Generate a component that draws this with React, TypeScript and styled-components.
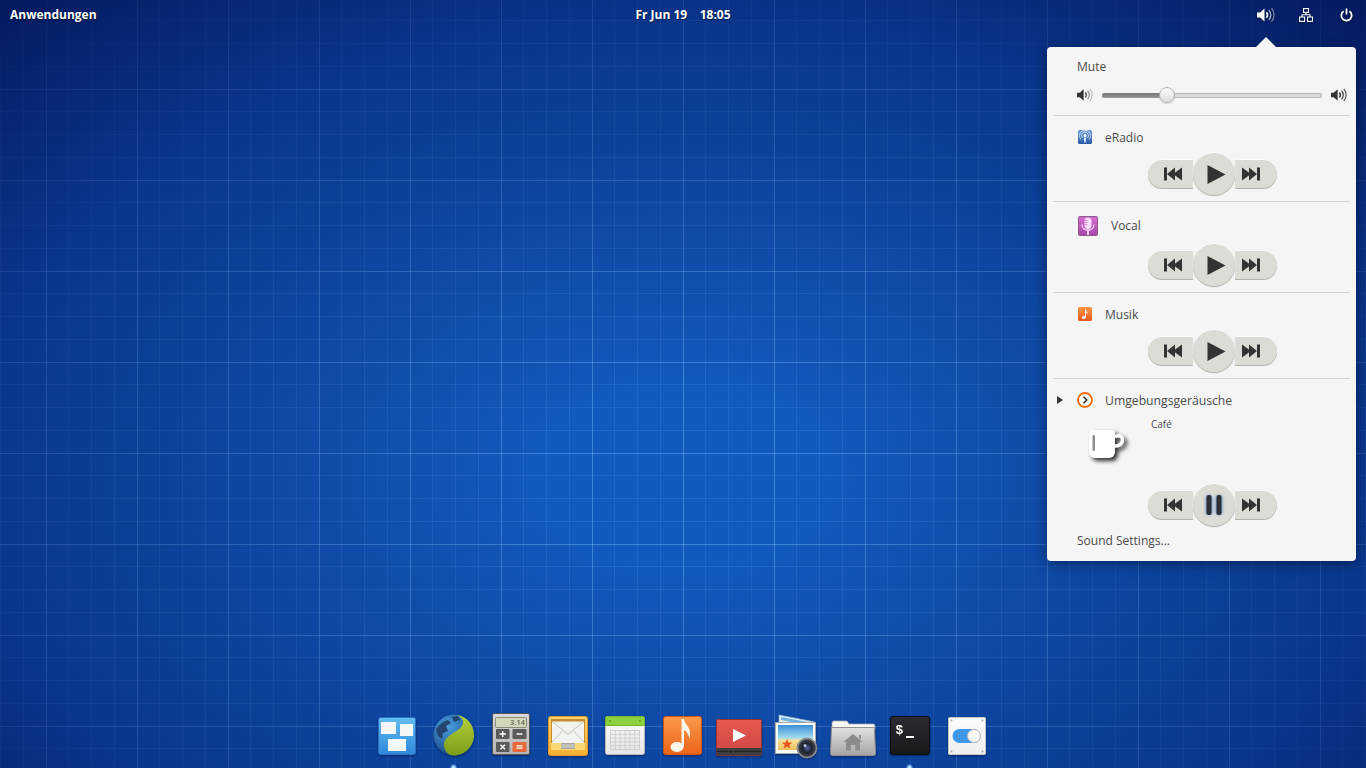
import React from 'react'
import styled, { createGlobalStyle } from 'styled-components'

const GlobalStyle = createGlobalStyle`
  html, body { margin: 0; padding: 0; }
  body { width: 1366px; height: 768px; overflow: hidden; font-family: "Open Sans", "Noto Sans", sans-serif; }
`

const minor = 'rgba(110, 170, 255, 0.16)'
const major = 'rgba(125, 185, 255, 0.42)'

const Desktop = styled.div`
  position: relative;
  width: 1366px;
  height: 768px;
  overflow: hidden;
  display: flex;
  flex-direction: column;
  background-color: #1159ba;
  background-image:
    radial-gradient(ellipse 1000px 640px at 50% 62%, rgba(3, 20, 95, 0) 15%, rgba(3, 20, 95, 0.5) 70%, rgba(3, 18, 85, 0.88) 100%),
    linear-gradient(to right, ${major} 1px, transparent 1px),
    linear-gradient(to bottom, ${major} 1px, transparent 1px),
    linear-gradient(to right, transparent 22px, ${minor} 22px, ${minor} 23px, transparent 23px, transparent 45px, ${minor} 45px, ${minor} 46px, transparent 46px, transparent 68px, ${minor} 68px, ${minor} 69px, transparent 69px),
    linear-gradient(to bottom, transparent 22px, ${minor} 22px, ${minor} 23px, transparent 23px, transparent 45px, ${minor} 45px, ${minor} 46px, transparent 46px, transparent 68px, ${minor} 68px, ${minor} 69px, transparent 69px);
  background-size: 100% 100%, 91px 91px, 91px 91px, 91px 91px, 91px 91px;
  background-position: 0 0, 46px 0, 0 89px, 46px 0, 0 89px;
`

const Panel = styled.header`
  height: 28px;
  display: grid;
  grid-template-columns: 1fr auto 1fr;
  align-items: center;
  color: #fff;
  font-size: 12px;
  font-weight: 700;
  text-shadow: 0 1px 2px rgba(0, 0, 0, 0.6);
`

const AppsLabel = styled.div`
  padding-left: 10px;
`

const Clock = styled.div`
  white-space: pre;
`

const Indicators = styled.div`
  display: flex;
  justify-content: flex-end;
`

const Indicator = styled.div`
  width: 40px;
  height: 28px;
  padding-top: 2px;
  box-sizing: border-box;
  display: flex;
  align-items: center;
  justify-content: center;
  svg { filter: drop-shadow(0 1px 1px rgba(0, 0, 0, 0.5)); }
`

const Workspace = styled.main`
  flex: 1;
`

const Dock = styled.footer`
  height: 56px;
  padding-right: 3px;
  display: flex;
  justify-content: center;
`

const DockSlot = styled.div<{ $running?: boolean }>`
  position: relative;
  width: 57px;
  display: flex;
  justify-content: center;
  svg { display: block; filter: drop-shadow(0 1px 1px rgba(0, 0, 30, 0.45)); }
  &::after {
    content: '';
    display: ${p => (p.$running ? 'block' : 'none')};
    position: absolute;
    left: 25px;
    bottom: -3px;
    width: 7px;
    height: 7px;
    border-radius: 50%;
    background: radial-gradient(circle, #e6f4ff 0, #7fc0ff 35%, rgba(90, 170, 255, 0) 75%);
  }
`

const Popover = styled.section`
  position: absolute;
  top: 47px;
  right: 10px;
  width: 309px;
  height: 514px;
  border-radius: 4px;
  background: #f5f5f5;
  color: #4b4b4b;
  font-size: 12px;
  box-shadow: 0 3px 14px rgba(0, 0, 20, 0.45);
  &::before {
    content: '';
    position: absolute;
    top: -10px;
    left: 209px;
    border-left: 10px solid transparent;
    border-right: 10px solid transparent;
    border-bottom: 10px solid #f5f5f5;
  }
`

const VolumeSection = styled.div`
  height: 68px;
  padding: 12px 0 0 30px;
  box-sizing: border-box;
`

const RowLabel = styled.div`
  height: 16px;
  line-height: 16px;
`

const SliderRow = styled.div`
  margin-top: 12px;
  display: flex;
  align-items: center;
  gap: 9px;
  height: 16px;
  svg { flex: none; }
`

const Track = styled.div`
  position: relative;
  width: 220px;
  height: 5px;
  border-radius: 3px;
  background: linear-gradient(#cfcfcf, #e6e6e6);
  box-shadow: inset 0 0 0 1px #b9b9b9;
`

const TrackFill = styled.div`
  height: 100%;
  border-radius: 3px 0 0 3px;
  background: linear-gradient(#777, #979797);
`

const Thumb = styled.div`
  position: absolute;
  top: -6px;
  width: 16px;
  height: 16px;
  margin-left: -8px;
  box-sizing: border-box;
  border: 1px solid #b4b4b0;
  border-radius: 50%;
  background: linear-gradient(#fafafa, #dedede);
  box-shadow: 0 1px 1px rgba(0, 0, 0, 0.15);
`

const Separator = styled.hr`
  margin: 0 6px;
  border: 0;
  height: 1px;
  background: #d3d3d3;
`

const Player = styled.div<{ $top: number }>`
  padding: ${p => p.$top}px 0 6px;
`

const PlayerHead = styled.div<{ $indent?: number; $tall?: boolean }>`
  display: flex;
  align-items: center;
  height: ${p => (p.$tall ? 20 : 16)}px;
  padding-left: ${p => p.$indent ?? 31}px;
  gap: 13px;
  svg { display: block; flex: none; }
`

const HeadLabel = styled.span<{ $settled?: boolean }>`
  font-size: 12px;
  line-height: 16px;
  margin-top: ${p => (p.$settled ? 0 : 2)}px;
`

const GroupLabel = styled.span`
  margin: 2px 0 0 -1px;
  font-size: 12.2px;
  line-height: 16px;
`

const ExpandArrow = styled.span`
  width: 0;
  height: 0;
  margin-right: 1px;
  border-top: 4px solid transparent;
  border-bottom: 4px solid transparent;
  border-left: 6px solid #333;
`

const Controls = styled.div`
  margin: 8px 0 0 101px;
  width: 129px;
  height: 42px;
  display: flex;
  align-items: center;
`

const SideButton = styled.button<{ $side: 'left' | 'right' }>`
  flex: none;
  width: ${p => (p.$side === 'left' ? 45 : 42)}px;
  height: 28px;
  padding: 0;
  border: 0;
  display: flex;
  align-items: center;
  justify-content: ${p => (p.$side === 'left' ? 'flex-start' : 'flex-end')};
  padding-left: ${p => (p.$side === 'left' ? 16 : 0)}px;
  padding-right: ${p => (p.$side === 'right' ? 17 : 0)}px;
  background: #dcdbd6;
  border-radius: ${p => (p.$side === 'left' ? '14px 0 0 14px' : '0 14px 14px 0')};
  box-shadow: 0 1px 0 #b3b2ab, 0 -1px 0 #fbfbfb;
`

const RoundButton = styled.button`
  flex: none;
  position: relative;
  z-index: 1;
  width: 42px;
  height: 42px;
  padding: 0;
  border: 0;
  border-radius: 50%;
  display: flex;
  align-items: center;
  justify-content: center;
  background: #dcdbd6;
  box-shadow: 0 1px 1px #b3b2ab, 0 -1px 0 #fdfdfd, 0 0 0 1px #e9e8e4;
`

const PlayGlyph = styled.span`
  display: block;
  margin-left: 5px;
  svg { display: block; }
`

const CoverRow = styled.div`
  height: 68px;
  padding-left: 42px;
  display: flex;
  gap: 14px;
`

const Cover = styled.div`
  margin-top: 22px;
  width: 48px;
  svg { display: block; filter: drop-shadow(3px 3px 2px rgba(0, 0, 0, 0.8)); }
`

const TrackName = styled.div`
  margin-top: 9px;
  font-size: 10px;
  line-height: 14px;
`

const SettingsLink = styled.div`
  padding: 1px 0 0 30px;
  height: 16px;
  line-height: 16px;
`

const Speaker = ({ fill, arcs, size = 18 }: { fill: string; arcs: string[]; size?: number }) => (
  <svg width={size} height={16} viewBox="0 0 18 16">
    <path d="M0 5.5h3L7.5 1.5v13L3 10.500H0z" fill={fill} />
    <path d="M9.500 5.200c1.200 1.600 1.200 4 0 5.600" fill="none" stroke={arcs[0]} strokeWidth="1.600" />
    <path d="M12 3.200c2.200 3 2.200 6.600 0 9.600" fill="none" stroke={arcs[1]} strokeWidth="1.400" />
    <path d="M14.500 1.200c3.100 4.200 3.100 9.400 0 13.600" fill="none" stroke={arcs[2]} strokeWidth="1.300" />
  </svg>
)

const NetworkIcon = () => (
  <svg width="14" height="14" viewBox="0 0 14 14" fill="none" stroke="#fff" strokeWidth="1.100">
    <rect x="4.500" y="0.600" width="5" height="3.800" />
    <rect x="0.600" y="9" width="5" height="4.400" />
    <rect x="8.500" y="9" width="5" height="4.400" />
    <path d="M7 4.500v2.300M3 9V6.800h8V9" />
  </svg>
)

const PowerIcon = () => (
  <svg width="13" height="14" viewBox="0 0 13 14" fill="none" stroke="#fff" strokeWidth="1.800">
    <path d="M3.600 3.200a5.200 5.200 0 1 0 5.800 0" />
    <path d="M6.500 0.500v6" />
  </svg>
)

const PrevIcon = () => (
  <svg width="18" height="14" viewBox="0 0 18 14" fill="#333">
    <rect x="0" y="0.500" width="3" height="13" />
    <path d="M11 0.500v13L3 7zM18 0.500v13L9 7z" />
  </svg>
)

const NextIcon = () => (
  <svg width="18" height="14" viewBox="0 0 18 14" fill="#333">
    <rect x="15" y="0.500" width="3" height="13" />
    <path d="M7 0.500v13L15 7zM0 0.500v13L9 7z" />
  </svg>
)

const PlayIcon = () => (
  <PlayGlyph>
    <svg width="19" height="19" viewBox="0 0 19 19" fill="#333">
      <path d="M0.500 0L18.500 9.500 0.500 19z" />
    </svg>
  </PlayGlyph>
)

const PauseIcon = () => (
  <svg width="24" height="28" viewBox="0 0 24 28">
    <defs>
      <filter id="pauseGlow" x="-30%" y="-10%" width="160%" height="120%">
        <feGaussianBlur stdDeviation="1" />
      </filter>
    </defs>
    <g fill="#4f86c6" opacity="0.75" filter="url(#pauseGlow)">
      <rect x="3.500" y="4" width="7" height="20" rx="3" />
      <rect x="13.500" y="4" width="7" height="20" rx="3" />
    </g>
    <rect x="4.500" y="4" width="5" height="20" rx="2" fill="#2c2f36" />
    <rect x="14.500" y="4" width="5" height="20" rx="2" fill="#2c2f36" />
  </svg>
)

const RadioIcon = () => (
  <svg width="14" height="14" viewBox="0 0 14 14">
    <defs>
      <linearGradient id="radioBg" x1="0" y1="0" x2="0" y2="1">
        <stop offset="0" stopColor="#6b9bd6" />
        <stop offset="1" stopColor="#2a5da6" />
      </linearGradient>
    </defs>
    <rect width="14" height="14" rx="1.500" fill="url(#radioBg)" />
    <circle cx="7" cy="5.500" r="1.500" fill="#fff" />
    <path d="M4.500 8a3.500 3.500 0 1 1 5 0M3 9.500a5.500 5.500 0 1 1 8 0" fill="none" stroke="#e4eefb" strokeWidth="0.800" />
    <path d="M6 7.500h2l-.4 5H6.400z" fill="#fff" />
  </svg>
)

const MicIcon = () => (
  <svg width="20" height="20" viewBox="0 0 20 20">
    <defs>
      <linearGradient id="micBg" x1="0" y1="0" x2="0" y2="1">
        <stop offset="0" stopColor="#d46fd0" />
        <stop offset="1" stopColor="#a843a8" />
      </linearGradient>
    </defs>
    <rect x="0.500" y="0.500" width="19" height="19" rx="1" fill="url(#micBg)" stroke="#8c5a8c" />
    <rect x="6.500" y="1.500" width="7" height="11.500" rx="3.500" fill="#f9dcf9" />
    <path d="M6.500 4.500h3M6.500 6.500h3M6.500 8.500h3" stroke="#c873c8" strokeWidth="0.700" />
    <path d="M4 8.500c0 7.500 12 7.500 12 0" fill="none" stroke="#f9dcf9" strokeWidth="1.300" />
    <path d="M10 14v5" stroke="#f9dcf9" strokeWidth="1.800" />
  </svg>
)

const NoteSmallIcon = () => (
  <svg width="14" height="14" viewBox="0 0 14 14">
    <defs>
      <linearGradient id="noteBg" x1="0" y1="0" x2="0" y2="1">
        <stop offset="0" stopColor="#f9954a" />
        <stop offset="1" stopColor="#e9581c" />
      </linearGradient>
    </defs>
    <rect width="14" height="14" rx="1.500" fill="url(#noteBg)" />
    <ellipse cx="5.800" cy="10.600" rx="2" ry="1.500" fill="#fff" />
    <path d="M7 10.500V2.500h.9c.2 1.800 2.300 2.300 1.500 5 -.3-1.300-1.100-1.800-1.500-1.900v4.900z" fill="#fff" />
  </svg>
)

const AmbientIcon = () => (
  <svg width="16" height="16" viewBox="0 0 16 16" fill="none">
    <circle cx="8" cy="8" r="7" stroke="#f26a12" strokeWidth="1.800" fill="#fff" />
    <path d="M6.500 4.800L9.700 8 6.500 11.200" stroke="#333" strokeWidth="1.600" />
  </svg>
)

const CupIcon = () => (
  <svg width="36" height="30" viewBox="0 0 36 30">
    <path d="M0 3a3 3 0 0 1 3-3h20a3 3 0 0 1 3 3v19a6 6 0 0 1-6 6H6a6 6 0 0 1-6-6z" fill="#fff" />
    <path d="M26 7c4-2.500 7.500-.5 7.500 3s-3.500 6.500-7.500 6" fill="none" stroke="#fff" strokeWidth="3.500" />
    <rect x="3.500" y="5" width="2.500" height="16" rx="1" fill="#8f8f8f" />
  </svg>
)

const MultitaskIcon = () => (
  <svg width="48" height="48" viewBox="0 0 48 48">
    <defs>
      <linearGradient id="mtBg" x1="0" y1="0" x2="0" y2="1">
        <stop offset="0" stopColor="#62bdf0" />
        <stop offset="1" stopColor="#2f88dc" />
      </linearGradient>
    </defs>
    <rect x="5.500" y="5.500" width="37" height="37" rx="2" fill="url(#mtBg)" stroke="#2a72bf" />
    <rect x="8" y="10" width="15" height="12" fill="#f5f8fb" />
    <rect x="27" y="12" width="13" height="12" fill="#f5f8fb" />
    <rect x="15" y="27" width="18" height="12" fill="#f5f8fb" />
  </svg>
)

const BrowserIcon = () => (
  <svg width="48" height="48" viewBox="0 0 48 48">
    <defs>
      <radialGradient id="globe" cx="0.350" cy="0.300" r="0.800">
        <stop offset="0" stopColor="#4a9ee0" />
        <stop offset="1" stopColor="#123f7c" />
      </radialGradient>
      <linearGradient id="leaf" x1="0" y1="0" x2="0" y2="1">
        <stop offset="0" stopColor="#b6cf3a" />
        <stop offset="1" stopColor="#7a9e1a" />
      </linearGradient>
    </defs>
    <circle cx="24" cy="23" r="20.500" fill="url(#globe)" />
    <path d="M6 18c3-6 8-9 12-10l3 3-5 3 2 5-5 2-1 6-4-3zM22 5l6-1 2 4-6 2z" fill="#24466e" />
    <path d="M27 3c9 1.500 17 9 17 20 0 11-9 20.500-20 20.500-6 0-10-5-10-10.500 0-6 5-9 9-12 5-3 9-5 10-10 .5-3-2-6-6-8z" fill="url(#leaf)" />
  </svg>
)

const CalcIcon = () => (
  <svg width="48" height="48" viewBox="0 0 48 48">
    <defs>
      <linearGradient id="calcBg" x1="0" y1="0" x2="0" y2="1">
        <stop offset="0" stopColor="#d9d9d9" />
        <stop offset="1" stopColor="#b4b4b4" />
      </linearGradient>
    </defs>
    <rect x="5.500" y="1.500" width="37" height="41" rx="1.500" fill="url(#calcBg)" stroke="#55565a" />
    <rect x="8.500" y="5.500" width="31" height="10" rx="1" fill="#d6d6bc" stroke="#8a8a7c" />
    <text x="38" y="12.800" textAnchor="end" fontFamily="'Open Sans', sans-serif" fontSize="7.500" fontWeight="600" fill="#66665a">3.14</text>
    <rect x="9" y="17" width="13.500" height="10" rx="1" fill="#5b5a56" />
    <rect x="25.500" y="17" width="14" height="10" rx="1" fill="#5b5a56" />
    <rect x="9" y="30" width="13.500" height="10" rx="1" fill="#5b5a56" />
    <rect x="25.500" y="30" width="14" height="10" rx="1" fill="#e8683a" />
    <path d="M12.500 22h6.500M15.750 18.900v6.200M29.500 22h6" stroke="#fff" strokeWidth="1.400" />
    <path d="M13.500 32.800l4.500 4.400M18 32.800l-4.500 4.400" stroke="#fff" strokeWidth="1.400" />
    <path d="M29.500 33.800h6M29.500 36.200h6" stroke="#fff" strokeWidth="1.200" />
  </svg>
)

const MailIcon = () => (
  <svg width="48" height="48" viewBox="0 0 48 48">
    <defs>
      <linearGradient id="mailBg" x1="0" y1="0" x2="0" y2="1">
        <stop offset="0" stopColor="#fbd46a" />
        <stop offset="1" stopColor="#f5ae2e" />
      </linearGradient>
    </defs>
    <rect x="4.500" y="4.500" width="39" height="39" rx="2" fill="url(#mailBg)" stroke="#d69a2a" />
    <rect x="7" y="7" width="34" height="24" fill="#c98a2e" />
    <rect x="8" y="9.500" width="32" height="22" fill="#f2f2ee" />
    <path d="M8 9.500l16 12.500 16-12.500M8 30l11-11.500M40 30L29 18.500" fill="none" stroke="#c4c4bf" strokeWidth="1" />
    <path d="M7 31h10l1 3h12l1-3h10v7H7z" fill="#fbd875" />
    <rect x="17" y="31" width="14" height="6" fill="#aaa8a1" />
    <path d="M17 33h14M17 35h14" stroke="#e7e6e1" strokeWidth="0.800" />
  </svg>
)

const CalendarIcon = () => (
  <svg width="48" height="48" viewBox="0 0 48 48">
    <defs>
      <linearGradient id="calBody" x1="0" y1="0" x2="0" y2="1">
        <stop offset="0" stopColor="#fafafa" />
        <stop offset="1" stopColor="#e6e6e6" />
      </linearGradient>
    </defs>
    <rect x="4.500" y="4.500" width="39" height="38" rx="2" fill="url(#calBody)" stroke="#bcbcbc" />
    <path d="M4.500 6.500a2 2 0 0 1 2-2h35a2 2 0 0 1 2 2v7h-39z" fill="#8ed13f" stroke="#79b431" />
    <circle cx="9" cy="9" r="1" fill="#5f9a23" />
    <circle cx="39" cy="9" r="1" fill="#5f9a23" />
    <path d="M9.500 18.500h29v19h-29zM9.500 22.300h29M9.500 26.100h29M9.500 29.900h29M9.500 33.700h29M14.300 18.500v19M19.200 18.500v19M24 18.500v19M28.800 18.500v19M33.700 18.500v19" fill="none" stroke="#cfcfca" strokeWidth="1" />
  </svg>
)

const MusicIcon = () => (
  <svg width="48" height="48" viewBox="0 0 48 48">
    <defs>
      <linearGradient id="musicBg" x1="0" y1="0" x2="0" y2="1">
        <stop offset="0" stopColor="#fb9a4a" />
        <stop offset="1" stopColor="#ec6418" />
      </linearGradient>
    </defs>
    <rect x="5.500" y="4.500" width="38" height="38" rx="2" fill="url(#musicBg)" stroke="#c9581c" />
    <ellipse cx="19" cy="35" rx="6.500" ry="5" fill="#fdf6ea" />
    <path d="M23.500 35V7h2.500c.5 6 8.500 8 5.500 20-1-5.500-3.500-8-5.500-9v17z" fill="#fdf6ea" />
  </svg>
)

const VideoIcon = () => (
  <svg width="48" height="48" viewBox="0 0 48 48">
    <defs>
      <linearGradient id="videoBg" x1="0" y1="0" x2="0" y2="1">
        <stop offset="0" stopColor="#e65a52" />
        <stop offset="1" stopColor="#cf4440" />
      </linearGradient>
    </defs>
    <rect x="1.500" y="7.500" width="45" height="36" rx="1" fill="url(#videoBg)" stroke="#8f3a36" />
    <rect x="1.500" y="36" width="45" height="7.500" fill="#3c3d40" />
    <path d="M1.500 39.500h45" stroke="#1f2022" strokeWidth="1" />
    <circle cx="16" cy="39.500" r="2" fill="#222" stroke="#555" strokeWidth="0.700" />
    <path d="M18 17l13 6.500L18 30z" fill="#fff" />
  </svg>
)

const PhotosIcon = () => (
  <svg width="48" height="48" viewBox="0 0 48 48">
    <defs>
      <linearGradient id="beach" x1="0" y1="0" x2="0" y2="1">
        <stop offset="0" stopColor="#3a8fd6" />
        <stop offset="0.520" stopColor="#a5dcef" />
        <stop offset="0.600" stopColor="#f5e09a" />
        <stop offset="1" stopColor="#eebf5a" />
      </linearGradient>
      <radialGradient id="lens" cx="0.500" cy="0.500" r="0.500">
        <stop offset="0" stopColor="#5a66a8" />
        <stop offset="0.450" stopColor="#1c2230" />
        <stop offset="0.800" stopColor="#3a3c44" />
        <stop offset="1" stopColor="#c5c7cc" />
      </radialGradient>
    </defs>
    <path d="M7 3l36 7-3 25-33-6z" fill="#e8f2fa" stroke="#8fb6d6" strokeWidth="0.800" />
    <path d="M9 5l32 6-.5 3L9 8z" fill="#6fb4e4" />
    <rect x="3.500" y="10.500" width="40" height="31" fill="#fafafa" stroke="#a8a8a8" />
    <rect x="6" y="13" width="35" height="25" fill="url(#beach)" />
    <path d="M15 27l1.500 3.500 3.700.2-2.900 2.300 1 3.500-3.300-2-3.200 2 1-3.500-2.900-2.300 3.700-.2z" fill="#e8571e" />
    <circle cx="35" cy="36" r="10" fill="url(#lens)" stroke="#7e8087" />
    <circle cx="33" cy="33.500" r="1.500" fill="#d9def5" opacity="0.800" />
  </svg>
)

const FilesIcon = () => (
  <svg width="48" height="48" viewBox="0 0 48 48">
    <defs>
      <linearGradient id="folderBg" x1="0" y1="0" x2="0" y2="1">
        <stop offset="0" stopColor="#e2e2e2" />
        <stop offset="1" stopColor="#a5a5a5" />
      </linearGradient>
    </defs>
    <path d="M3 11a2 2 0 0 1 2-2h13l2 3h24a2 2 0 0 1 2 2v4H3z" fill="#f8f8f8" stroke="#a9a9a9" strokeWidth="0.800" />
    <path d="M2.500 15.500h43l1 26a2 2 0 0 1-2 2h-41a2 2 0 0 1-2-2z" fill="url(#folderBg)" stroke="#8f8f8f" />
    <path d="M24 22l9.500 8H31v8.500h-4.800V33h-4.400v5.500H17V30h-2.500zM30 23h2v4.500l-2-1.800z" fill="#8b8b8b" />
  </svg>
)

const TerminalIcon = () => (
  <svg width="48" height="48" viewBox="0 0 48 48">
    <defs>
      <linearGradient id="termBg" x1="0" y1="0" x2="0" y2="1">
        <stop offset="0" stopColor="#2a2b30" />
        <stop offset="1" stopColor="#17181c" />
      </linearGradient>
    </defs>
    <rect x="4.500" y="4.500" width="39" height="38" rx="2" fill="url(#termBg)" stroke="#0c0d10" />
    <text x="9.500" y="22" fontFamily="'Liberation Mono', monospace" fontSize="13" fontWeight="700" fill="#fff">$</text>
    <rect x="20" y="24" width="8" height="2" fill="#fff" />
  </svg>
)

const SwitchIcon = () => (
  <svg width="48" height="48" viewBox="0 0 48 48">
    <defs>
      <linearGradient id="swBg" x1="0" y1="0" x2="0" y2="1">
        <stop offset="0" stopColor="#fdfdfd" />
        <stop offset="1" stopColor="#eeeeee" />
      </linearGradient>
    </defs>
    <rect x="5.500" y="5.500" width="37" height="37" rx="1" fill="url(#swBg)" stroke="#c8c8c8" />
    <circle cx="8.500" cy="8.500" r="0.900" fill="#a0a0a0" />
    <circle cx="39.500" cy="8.500" r="0.900" fill="#a0a0a0" />
    <circle cx="8.500" cy="39.500" r="0.900" fill="#a0a0a0" />
    <circle cx="39.500" cy="39.500" r="0.900" fill="#a0a0a0" />
    <rect x="9.500" y="17" width="28" height="14" rx="7" fill="#3f97e8" />
    <circle cx="31" cy="24" r="6.500" fill="#f7f7f7" stroke="#b9b9b9" />
  </svg>
)

const dockItems: { icon: React.ReactNode; running?: boolean }[] = [
  { icon: <MultitaskIcon /> },
  { icon: <BrowserIcon />, running: true },
  { icon: <CalcIcon /> },
  { icon: <MailIcon /> },
  { icon: <CalendarIcon /> },
  { icon: <MusicIcon /> },
  { icon: <VideoIcon /> },
  { icon: <PhotosIcon /> },
  { icon: <FilesIcon /> },
  { icon: <TerminalIcon />, running: true },
  { icon: <SwitchIcon /> },
]

const MediaControls = ({ playing }: { playing?: boolean }) => (
  <Controls>
    <SideButton $side="left"><PrevIcon /></SideButton>
    <RoundButton>{playing ? <PauseIcon /> : <PlayIcon />}</RoundButton>
    <SideButton $side="right"><NextIcon /></SideButton>
  </Controls>
)

const volume = 65 / 220

export default function App() {
  return (
    <Desktop>
      <GlobalStyle />
      <Panel>
        <AppsLabel>Anwendungen</AppsLabel>
        <Clock>Fr Jun 19    18:05</Clock>
        <Indicators>
          <Indicator><Speaker fill="#fff" arcs={['#fff', '#aab4d0', '#6f80aa']} /></Indicator>
          <Indicator><NetworkIcon /></Indicator>
          <Indicator><PowerIcon /></Indicator>
        </Indicators>
      </Panel>
      <Workspace />
      <Dock>
        {dockItems.map((item, i) => (
          <DockSlot key={i} $running={item.running}>{item.icon}</DockSlot>
        ))}
      </Dock>
      <Popover>
        <VolumeSection>
          <RowLabel>Mute</RowLabel>
          <SliderRow>
            <Speaker fill="#333" arcs={['#555', '#999', '#bbb']} size={16} />
            <Track>
              <TrackFill style={{ width: `${volume * 100}%` }} />
              <Thumb style={{ left: `${volume * 100}%` }} />
            </Track>
            <Speaker fill="#333" arcs={['#333', '#444', '#555']} size={16} />
          </SliderRow>
        </VolumeSection>
        <Separator />
        <Player $top={13}>
          <PlayerHead><RadioIcon /><HeadLabel>eRadio</HeadLabel></PlayerHead>
          <MediaControls />
        </Player>
        <Separator />
        <Player $top={14}>
          <PlayerHead $tall><MicIcon /><HeadLabel $settled>Vocal</HeadLabel></PlayerHead>
          <MediaControls />
        </Player>
        <Separator />
        <Player $top={13}>
          <PlayerHead><NoteSmallIcon /><HeadLabel>Musik</HeadLabel></PlayerHead>
          <MediaControls />
        </Player>
        <Separator />
        <Player $top={13}>
          <PlayerHead $indent={10}>
            <ExpandArrow />
            <AmbientIcon />
            <GroupLabel>Umgebungsgeräusche</GroupLabel>
          </PlayerHead>
          <CoverRow>
            <Cover><CupIcon /></Cover>
            <TrackName>Café</TrackName>
          </CoverRow>
          <MediaControls playing />
        </Player>
        <SettingsLink>Sound Settings...</SettingsLink>
      </Popover>
    </Desktop>
  )
}
